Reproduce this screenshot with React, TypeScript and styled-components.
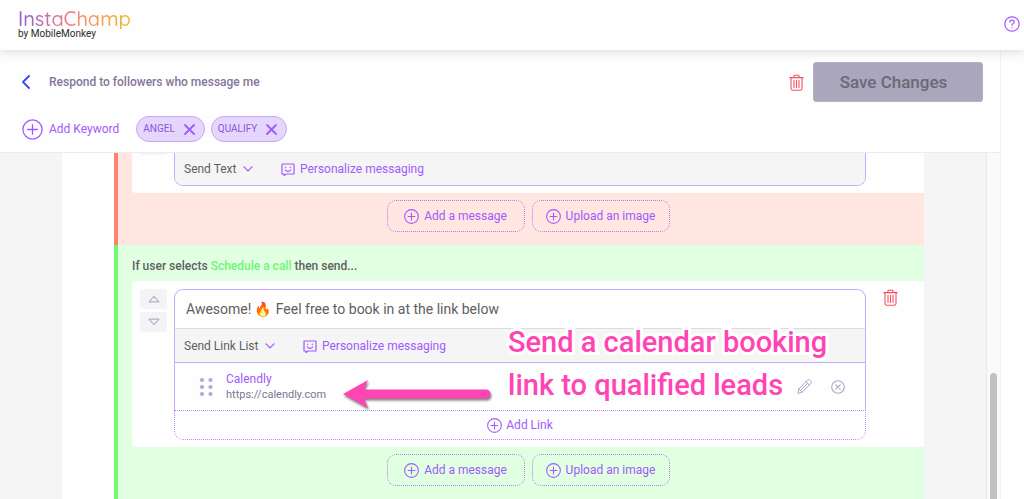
import React from "react";
import styled, { createGlobalStyle } from "styled-components";

const GlobalStyle = createGlobalStyle`
  *, *::before, *::after { box-sizing: border-box; }
  body {
    margin: 0;
    background: #fefefe;
    color: #5f5f5f;
    font: 12px/16px Roboto, "Liberation Sans", sans-serif;
  }
  svg { display: block; flex: none; }
`;

const purple = "#a259ff";
const outline = "#c9a9fb";

const Page = styled.div`
  display: flex;
  flex-direction: column;
  height: 100vh;
  overflow: hidden;
`;

const Header = styled.header`
  position: relative;
  z-index: 1;
  display: flex;
  align-items: center;
  justify-content: space-between;
  flex: none;
  height: 50px;
  padding: 0 4px 2px 18px;
  background: #fefefe;
  box-shadow: 0 2px 10px rgba(0, 0, 0, 0.14);
`;

const Brand = styled.a`
  display: flex;
  flex-direction: column;
  text-decoration: none;
`;

const BrandName = styled.span`
  font: 500 20px/20px Quicksand, Comfortaa, Lato, sans-serif;
  background: linear-gradient(90deg, #8a5bd8, #fb8478 50%, #e8bf2a);
  background-clip: text;
  -webkit-background-clip: text;
  color: transparent;
`;

const BrandOwner = styled.span`
  color: #2b2b2b;
  font-size: 10px;
  line-height: 10px;
`;

const BareButton = styled.button`
  display: flex;
  align-items: center;
  padding: 0;
  border: 0;
  background: none;
  color: ${purple};
  font: inherit;
  white-space: nowrap;
  cursor: pointer;
`;

const DangerButton = styled(BareButton)`
  color: #f8505e;
`;

const MutedButton = styled(BareButton)`
  color: #a9a2c8;
`;

const Body = styled.div`
  display: flex;
  flex: 1;
  min-height: 0;
`;

const Main = styled.main`
  display: flex;
  flex: 1;
  flex-direction: column;
  min-width: 0;
  border-right: 1px solid #f3f3f5;
`;

const SideRail = styled.aside`
  flex: none;
  width: 23px;
`;

const Toolbar = styled.div`
  display: flex;
  flex: none;
  flex-direction: column;
  gap: 14px;
  height: 103px;
  padding: 12px 17px 0 22px;
  border-bottom: 1px solid #ececee;
`;

const ToolbarRow = styled.div`
  display: flex;
  align-items: center;
`;

const Title = styled.h1`
  flex: 1;
  margin: 0 0 0 19px;
  color: #84759c;
  font-size: 12px;
  font-weight: 500;
  line-height: 16px;
`;

const SaveButton = styled.button`
  height: 40px;
  width: 170px;
  margin-left: 9px;
  padding: 0 9px 0 0;
  border: 1px solid #b6b1c6;
  border-radius: 3px;
  background: #aaa6bb;
  color: #6b6878;
  font: 500 17px/24px Roboto, sans-serif;
`;

const AddKeyword = styled(BareButton)`
  gap: 6px;
  margin-right: 17px;
`;

const Chip = styled.span`
  display: flex;
  align-items: center;
  gap: 9px;
  height: 26px;
  margin-right: 6px;
  padding: 0 9px 0 6px;
  border: 1px solid #c9a6f8;
  border-radius: 13px;
  background: #e5d6fd;
  color: #8b55d9;
  font-size: 10px;
`;

const Scroller = styled.div`
  display: flex;
  flex: 1;
  min-height: 0;
  background: #f5f5f5;
`;

const Panel = styled.div`
  display: flex;
  flex: 1;
  flex-direction: column;
  min-width: 0;
  margin: 0 62px;
  padding-left: 52px;
  overflow: hidden;
  background: #fefefe;
`;

const Track = styled.div`
  flex: none;
  width: 14px;
  padding: 220px 3px 0;
  border-left: 1px solid #e8e8e8;
  background: #fafafa;
`;

const Thumb = styled.div`
  height: 100%;
  border-radius: 4px 4px 0 0;
  background: #c1c1c1;
`;

const Branch = styled.section<{ $tone: "red" | "green"; $fill?: boolean }>`
  flex: ${(p) => (p.$fill ? "1 0 auto" : "none")};
  padding: 0 0 13px 14px;
  border-left: 4px solid ${(p) => (p.$tone === "red" ? "#ff826f" : "#70fb72")};
  background: ${(p) => (p.$tone === "red" ? "#ffe6e1" : "#e1ffe1")};
`;

const BranchTitle = styled.h2`
  margin: 0;
  padding: 13px 0 7px;
  color: #5f5f5f;
  font-size: 12px;
  font-weight: 500;
  line-height: 16px;
`;

const Choice = styled.span`
  color: #70f578;
`;

const Card = styled.div<{ $cut?: boolean }>`
  position: relative;
  display: flex;
  align-items: flex-start;
  gap: 7px;
  padding: ${(p) => (p.$cut ? "0" : "8px")} 26px 7px 8px;
  border-radius: ${(p) => (p.$cut ? "0 0 0 4px" : "4px 0 0 4px")};
  background: #fefefe;
`;

const Movers = styled.div`
  display: flex;
  flex: none;
  flex-direction: column;
  gap: 3px;
  width: 27px;
`;

const Mover = styled.button<{ $cut?: boolean }>`
  display: flex;
  align-items: center;
  justify-content: center;
  height: ${(p) => (p.$cut ? "2px" : "20px")};
  padding: 0;
  border: 0;
  border-radius: ${(p) => (p.$cut ? "0 0 3px 3px" : "3px")};
  background: #f4f4f6;
  color: #b5afca;
`;

const Composer = styled.div`
  flex: 1;
  min-width: 0;
`;

const ComposerBox = styled.div<{ $cut?: boolean }>`
  overflow: hidden;
  border: 1px solid ${outline};
  border-width: ${(p) => (p.$cut ? "0 1px 1px" : "1px 1px 0")};
  border-radius: ${(p) => (p.$cut ? "0 0 9px 9px" : "9px 9px 0 0")};
`;

const MessageInput = styled.input`
  display: block;
  width: 100%;
  height: 39px;
  padding: 0 11px;
  border: 0;
  border-bottom: 1px solid #dcdcde;
  background: transparent;
  color: #5f5f5f;
  font: 14px/20px Roboto, "Noto Color Emoji", sans-serif;
  outline: none;
`;

const Options = styled.div<{ $line?: boolean }>`
  display: flex;
  align-items: center;
  gap: 28px;
  height: ${(p) => (p.$line ? "34px" : "32px")};
  padding-left: 9px;
  border-bottom: ${(p) => (p.$line ? `1px solid ${outline}` : "0")};
  background: #f5f5f5;
`;

const Kind = styled.label`
  display: flex;
  align-items: center;
  gap: 6px;
  color: ${purple};
`;

const KindSelect = styled.select`
  appearance: none;
  padding: 0;
  border: 0;
  background: none;
  color: #5f5f5f;
  font: inherit;
`;

const Personalize = styled(BareButton)`
  gap: 5px;
`;

const LinkRow = styled.div`
  display: flex;
  align-items: center;
  height: 47px;
  padding: 0 20px 0 24px;
`;

const LinkText = styled.div`
  display: flex;
  flex: 1;
  flex-direction: column;
  margin-left: 13px;
`;

const LinkName = styled.span`
  color: ${purple};
`;

const LinkUrl = styled.a`
  color: #7d7595;
  font-size: 11px;
  text-decoration: none;
`;

const LinkActions = styled.div`
  display: flex;
  align-items: center;
  gap: 19px;
`;

const AddLink = styled(BareButton)`
  justify-content: center;
  gap: 4px;
  width: 100%;
  height: 30px;
  border: 1px dotted #b98cf8;
  border-radius: 0 0 9px 9px;
`;

const CardTools = styled.div`
  flex: none;
  width: 15px;
  margin-left: 10px;
`;

const Adders = styled.div`
  display: flex;
  justify-content: center;
  gap: 7px;
  padding-top: 7px;
`;

const Adder = styled(BareButton)`
  justify-content: center;
  gap: 5px;
  width: 138px;
  height: 32px;
  border: 1px dotted #b07cf5;
  border-radius: 9px;
`;

const Note = styled.p`
  position: absolute;
  top: 40px;
  left: 376px;
  margin: 0;
  color: #ff44b4;
  font-size: 29px;
  font-weight: 500;
  line-height: 43px;
  white-space: nowrap;
  -webkit-text-stroke: 6px #fefefe;
  paint-order: stroke fill;
  pointer-events: none;
`;

const NoteArrow = styled.svg`
  position: absolute;
  top: 96px;
  left: 209px;
  pointer-events: none;
`;

const stroke = {
  fill: "none",
  stroke: "currentColor",
  strokeLinecap: "round" as const,
  strokeLinejoin: "round" as const,
};

const CirclePlus = ({ size }: { size: number }) => (
  <svg width={size} height={size} viewBox="0 0 21 21" {...stroke} strokeWidth={size > 16 ? 1.3 : 1.5}>
    <circle cx="10.5" cy="10.5" r="9.6" />
    <path d="M10.5 5.7v9.6M5.7 10.5h9.6" />
  </svg>
);

const Trash = () => (
  <svg width="15" height="17" viewBox="0 0 15 17" {...stroke} strokeWidth="1.1">
    <path d="M.8 3.6h13.4M4.6 3.4l.8-2.2h4.2l.8 2.2M2 3.8v10.8c0 1 .6 1.6 1.5 1.6h8c.9 0 1.500-.6 1.500-1.600V3.800M5 6.200v7.400M7.500 6.200v7.400M10 6.200v7.400" />
  </svg>
);

const Cross = () => (
  <svg width="11" height="11" viewBox="0 0 11 11" {...stroke} strokeWidth="1.8">
    <path d="M1 1l9 9M10 1l-9 9" />
  </svg>
);

const ChevronDown = () => (
  <svg width="10" height="6" viewBox="0 0 10 6" {...stroke} strokeWidth="1.3">
    <path d="M1 .9l4 4 4-4" />
  </svg>
);

const Smiley = () => (
  <svg width="14" height="14" viewBox="0 0 14 14" {...stroke} strokeWidth="1.2">
    <path d="M1 2h12v10H5.200L3 13.600V12H1z" />
    <path d="M4.700 5.200v.4M9.300 5.200v.4M4.300 8c1.200 1.700 4.200 1.700 5.400 0" />
  </svg>
);

const Triangle = ({ down }: { down?: boolean }) => (
  <svg width="12" height="8" viewBox="0 0 12 8" {...stroke} strokeWidth="1.2">
    <path d={down ? "M1 1.200h10L6 6.600z" : "M1 6.800h10L6 1.400z"} />
  </svg>
);

const Grip = () => (
  <svg width="14" height="20" viewBox="0 0 14 20" fill="#b9a5d3">
    {[3, 10, 17].map((y) => (
      <g key={y}>
        <circle cx="3" cy={y} r="2.1" />
        <circle cx="11.500" cy={y} r="2.1" />
      </g>
    ))}
  </svg>
);

const Pencil = () => (
  <svg width="15" height="15" viewBox="0 0 15 15" {...stroke} strokeWidth="1">
    <path d="M1 14l.9-4.200L10.300 1.400c.9-.9 2-.9 2.800-.1l.6.6c.8.8.8 1.900-.1 2.800L5.200 13.100zM1.900 9.800l3.300 3.300M9 2.700L12.300 6M3.500 11.500l7.100-7.200" />
  </svg>
);

const CircleX = () => (
  <svg width="14" height="14" viewBox="0 0 14 14" {...stroke} strokeWidth="1.1">
    <circle cx="7" cy="7" r="6.3" />
    <path d="M4.800 4.800l4.400 4.400M9.200 4.800L4.800 9.200" />
  </svg>
);

function AddButtons() {
  return (
    <Adders>
      <Adder><CirclePlus size={15} />Add a message</Adder>
      <Adder><CirclePlus size={15} />Upload an image</Adder>
    </Adders>
  );
}

function ComposerOptions({ kind, line }: { kind: string; line?: boolean }) {
  return (
    <Options $line={line}>
      <Kind>
        <KindSelect aria-label="Message type" defaultValue={kind}>
          <option>{kind}</option>
        </KindSelect>
        <ChevronDown />
      </Kind>
      <Personalize><Smiley />Personalize messaging</Personalize>
    </Options>
  );
}

export default function App() {
  return (
    <Page>
      <GlobalStyle />
      <Header>
        <Brand href="#">
          <BrandName>InstaChamp</BrandName>
          <BrandOwner>by MobileMonkey</BrandOwner>
        </Brand>
        <BareButton aria-label="Help">
          <svg width="16" height="16" viewBox="0 0 16 16" {...stroke} strokeWidth="1.2">
            <circle cx="8" cy="8" r="7.2" />
            <path d="M5.800 6.200c0-2.900 4.400-2.800 4.400-.2 0 1.500-2.200 1.700-2.200 3.300M8 11.500v.2" />
          </svg>
        </BareButton>
      </Header>
      <Body>
        <Main>
          <Toolbar>
            <ToolbarRow>
              <BareButton aria-label="Back">
                <svg width="8" height="14" viewBox="0 0 8 14" {...stroke} stroke="#3a48f0" strokeWidth="1.8">
                  <path d="M7 1L1 7l6 6" />
                </svg>
              </BareButton>
              <Title>Respond to followers who message me</Title>
              <DangerButton aria-label="Delete"><Trash /></DangerButton>
              <SaveButton>Save Changes</SaveButton>
            </ToolbarRow>
            <ToolbarRow>
              <AddKeyword><CirclePlus size={21} />Add Keyword</AddKeyword>
              {["ANGEL", "QUALIFY"].map((word) => (
                <Chip key={word}>
                  {word}
                  <BareButton aria-label={`Remove ${word}`}><Cross /></BareButton>
                </Chip>
              ))}
            </ToolbarRow>
          </Toolbar>
          <Scroller>
            <Panel>
              <Branch $tone="red">
                <Card $cut>
                  <Movers><Mover $cut aria-label="Move down" /></Movers>
                  <Composer>
                    <ComposerBox $cut><ComposerOptions kind="Send Text" /></ComposerBox>
                  </Composer>
                  <CardTools />
                </Card>
                <AddButtons />
              </Branch>
              <Branch $tone="green" $fill>
                <BranchTitle>If user selects <Choice>Schedule a call</Choice> then send...</BranchTitle>
                <Card>
                  <Movers>
                    <Mover aria-label="Move up"><Triangle /></Mover>
                    <Mover aria-label="Move down"><Triangle down /></Mover>
                  </Movers>
                  <Composer>
                    <ComposerBox>
                      <MessageInput aria-label="Message" defaultValue="Awesome! 🔥 Feel free to book in at the link below" />
                      <ComposerOptions kind="Send Link List" line />
                      <LinkRow>
                        <Grip />
                        <LinkText>
                          <LinkName>Calendly</LinkName>
                          <LinkUrl href="#">https://calendly.com</LinkUrl>
                        </LinkText>
                        <LinkActions>
                          <MutedButton aria-label="Edit link"><Pencil /></MutedButton>
                          <MutedButton aria-label="Remove link"><CircleX /></MutedButton>
                        </LinkActions>
                      </LinkRow>
                    </ComposerBox>
                    <AddLink><CirclePlus size={15} />Add Link</AddLink>
                  </Composer>
                  <CardTools>
                    <DangerButton aria-label="Delete message"><Trash /></DangerButton>
                  </CardTools>
                  <NoteArrow width="154" height="34" viewBox="0 0 154 34">
                    <g style={{ filter: "drop-shadow(1px 2px 1px rgba(0,0,0,.5))" }}>
                      <path d="M2 17L27 3l-4 9.500h122a4.500 4.500 0 0 1 0 9H23L27 31z" fill="#ff44b4" />
                    </g>
                  </NoteArrow>
                  <Note>Send a calendar booking<br />link to qualified leads</Note>
                </Card>
                <AddButtons />
              </Branch>
            </Panel>
            <Track><Thumb /></Track>
          </Scroller>
        </Main>
        <SideRail />
      </Body>
    </Page>
  );
}
